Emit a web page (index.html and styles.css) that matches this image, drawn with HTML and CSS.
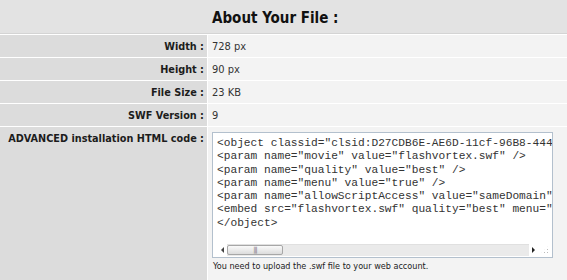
FILE: index.html
```html
<!DOCTYPE html>
<html lang="en">
<head>
  <meta charset="UTF-8" />
  <title>About Your File</title>
  <link rel="stylesheet" href="styles.css">
</head>
<body>

  <div class="info-table">
    <!-- en-tete -->
    <div class="cell head"></div>
    <div class="cell head title">About Your File :</div>

    <div class="cell label">Width :</div>
    <div class="cell value">728 px</div>

    <div class="cell label">Height :</div>
    <div class="cell value">90 px</div>

    <div class="cell label">File Size :</div>
    <div class="cell value">23 KB</div>

    <div class="cell label">SWF Version :</div>
    <div class="cell value">9</div>

    <div class="cell label top">ADVANCED installation HTML code :</div>
    <div class="cell value code-cell">
      <div class="code-box">
        <pre class="code">&lt;object classid="clsid:D27CDB6E-AE6D-11cf-96B8-444
&lt;param name="movie" value="flashvortex.swf" /&gt;
&lt;param name="quality" value="best" /&gt;
&lt;param name="menu" value="true" /&gt;
&lt;param name="allowScriptAccess" value="sameDomain"
&lt;embed src="flashvortex.swf" quality="best" menu="
&lt;/object&gt;</pre>
        <!-- barre de defilement horizontale -->
        <div class="hscroll">
          <span class="arrow left"></span>
          <div class="track">
            <div class="thumb">|||</div>
          </div>
          <span class="arrow right"></span>
          <span class="grip"></span>
        </div>
      </div>
      <div class="note">You need to upload the .swf file to your web account.</div>
    </div>
  </div>

</body>
</html>
```

FILE: styles.css
```css
body {
  margin: 0;
  font-family: "DejaVu Sans Condensed", "DejaVu Sans", sans-serif;
  font-size: 11px;
  color: #222;
  background: #fff;
}

.info-table {
  display: grid;
  grid-template-columns: 207px 1fr;
  grid-template-rows: 34px 22px 22px 22px 22px 1fr;
  row-gap: 1px;
  height: 280px;
  background: #fff;
}

.cell {
  display: flex;
  align-items: center;
}

.head {
  background: #e3e3e3;
  border-bottom: 1px solid #d4d4d4;
}

.title {
  font-size: 15px;
  font-weight: bold;
  color: #111;
  padding-left: 5px;
  padding-top: 2px;
}

.label {
  background: #dcdcdc;
  justify-content: flex-end;
  padding-right: 3px;
  font-size: 10.8px;
  font-weight: bold;
  color: #1c1c1c;
}

.label.top {
  align-items: flex-start;
  padding-top: 5px;
}

.value {
  background: #f3f3f3;
  border-left: 1px solid #fff;
  padding-left: 4px;
  color: #333;
}

.code-cell {
  flex-direction: column;
  align-items: flex-start;
  padding-top: 5px;
}

.code-box {
  width: 339px;
  height: 124px;
  border: 1px solid #b3c0cd;
  background: #fff;
  display: flex;
  flex-direction: column;
}

.code {
  flex: 1;
  margin: 0;
  padding: 4px 0 0 4px;
  overflow: hidden;
  white-space: pre;
  font-family: "Liberation Mono", "Courier New", monospace;
  font-size: 11.2px;
  line-height: 13.3px;
  color: #333;
}

/* Barre de defilement */
.hscroll {
  height: 13px;
  display: flex;
  align-items: center;
  padding: 0 2px 1px 8px;
  gap: 3px;
}

.arrow {
  width: 0;
  height: 0;
  border-top: 3px solid transparent;
  border-bottom: 3px solid transparent;
}

.arrow.left {
  border-right: 3px solid #444;
}

.arrow.right {
  border-left: 3px solid #222;
}

.track {
  flex: 1;
  height: 11px;
  background: #eaeaea;
  border-top: 1px solid #e0e0e0;
}

.thumb {
  width: 56px;
  height: 10px;
  box-sizing: border-box;
  border: 1px solid #a7a7a7;
  border-radius: 2px;
  background: linear-gradient(#fafafa, #dcdcdc);
  font-size: 7px;
  line-height: 8px;
  text-align: center;
  color: #777;
  letter-spacing: -1px;
}

.grip {
  width: 10px;
  height: 10px;
  margin-left: 2px;
  background: radial-gradient(circle, #bbb 0.7px, transparent 1px) 0 0 / 3px 3px;
  clip-path: polygon(100% 0, 100% 100%, 0 100%);
}

.note {
  margin-top: 3px;
  padding-left: 1px;
  font-size: 9px;
  color: #222;
}
```
